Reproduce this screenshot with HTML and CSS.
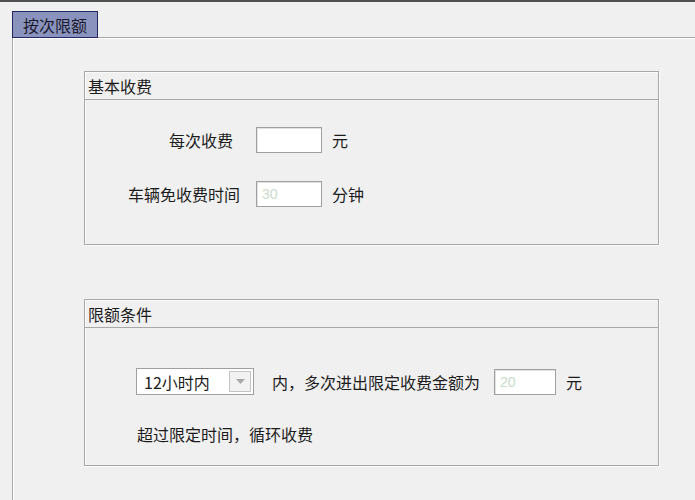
FILE: index.html
```html
<!DOCTYPE html>
<html lang="zh">
<head>
<meta charset="utf-8">
<link rel="stylesheet" href="styles.css">
</head>
<body>
<div class="topline"></div>
<div class="tabs"><div class="tab">按次限额</div></div>
<div class="panel">
  <div class="group g1">
    <div class="group-title">基本收费</div>
    <div class="group-body grid">
      <span class="label l1">每次收费</span>
      <div class="field"></div>
      <span class="unit">元</span>
      <span class="label">车辆免收费时间</span>
      <div class="field"><span class="ph">30</span></div>
      <span class="unit">分钟</span>
    </div>
  </div>
  <div class="group g2">
    <div class="group-title">限额条件</div>
    <div class="group-body limits">
      <div class="line">
        <div class="select">
          <span class="sel-text">12小时内</span>
          <span class="sel-btn"><svg width="9" height="5" viewBox="0 0 9 5"><path d="M0 0H9L4.5 5Z" fill="#a8a8a8"/></svg></span>
        </div>
        <span class="txt t1">内，多次进出限定收费金额为</span>
        <div class="field f2"><span class="ph">20</span></div>
        <span class="unit">元</span>
      </div>
      <div class="line2">超过限定时间，循环收费</div>
    </div>
  </div>
</div>
</body>
</html>
```

FILE: styles.css
```css
html, body {
  margin: 0;
  padding: 0;
  background: #f0f0f0;
  font-family: "Noto Sans CJK SC", "Liberation Sans", sans-serif;
  font-size: 16px;
  color: #1c1c1c;
  height: 500px;
  overflow: hidden;
}
body {
  display: flex;
  flex-direction: column;
}
.topline {
  height: 0;
  border-top: 2px solid #505050;
}
.tabs {
  padding-left: 12px;
  margin-top: 9px;
  display: flex;
  position: relative;
  z-index: 1;
  margin-bottom: -1px;
}
.tab {
  width: 84px;
  height: 25px;
  border: 1px solid #262663;
  background: #8a93bd;
  color: #1a1a2e;
  display: flex;
  align-items: center;
  justify-content: center;
  line-height: 1;
}
.panel {
  flex: 1;
  min-height: 0;
  margin-left: 12px;
  border-left: 1px solid #a8a8a8;
  border-top: 1px solid #a8a8a8;
  box-shadow: inset 1px 1px 0 #ffffff;
  padding: 33px 0 0 71px;
}
.group {
  width: 573px;
  border: 1px solid #a8a8a8;
  box-shadow: inset 1px 1px 0 #fbfbfb, 1px 1px 0 #fbfbfb;
  display: flex;
  flex-direction: column;
}
.g1 { height: 172px; }
.g2 { height: 165px; margin-top: 54px; }
.group-title {
  height: 27px;
  border-bottom: 1px solid #a8a8a8;
  display: flex;
  align-items: center;
  padding-left: 3px;
  line-height: 1;
}
.grid {
  display: grid;
  grid-template-columns: 161px 66px auto;
  column-gap: 10px;
  row-gap: 28px;
  align-items: center;
  justify-content: start;
  padding-top: 27px;
}
.label {
  justify-self: end;
  margin-right: 6px;
  line-height: 1;
}
.l1 { margin-right: 13px; }
.field {
  border: 1px solid #a0a0a0;
  box-shadow: inset 1px 1px 0 #e2e2e2;
  background: #ffffff;
  display: flex;
  align-items: center;
  padding-left: 5px;
  box-sizing: border-box;
  height: 26px;
}
.grid .field { width: 66px; }
.ph {
  font-family: "Liberation Sans", sans-serif;
  font-size: 14px;
  color: #c6dcc8;
}
.unit { line-height: 1; }
.limits {
  padding: 40px 0 0 51px;
}
.line {
  display: flex;
  align-items: center;
}
.select {
  width: 118px;
  height: 27px;
  box-sizing: border-box;
  border: 1px solid #a0a0a0;
  background: #ffffff;
  display: flex;
  align-items: center;
  justify-content: space-between;
  padding: 0 2px 0 7px;
}
.sel-text { line-height: 1; }
.sel-btn {
  width: 20px;
  height: 19px;
  border: 1px solid #c4c4c4;
  background: #f2f2f2;
  display: flex;
  align-items: center;
  justify-content: center;
}
.txt { margin-left: 18px; line-height: 1; }
.f2 { width: 62px; margin-left: 14px; margin-right: 10px; }
.line2 {
  margin-top: 31px;
  margin-left: 1px;
  line-height: 1;
}
```
